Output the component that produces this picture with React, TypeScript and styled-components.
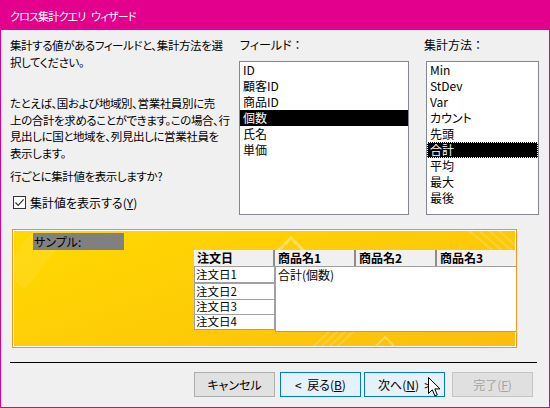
import * as React from 'react';
import styled, { createGlobalStyle, css } from 'styled-components';

const GlobalStyle = createGlobalStyle`
  html, body {
    margin: 0;
    padding: 0;
    background: #ffffff;
  }
`;

const fields = ['ID', '顧客ID', '商品ID', '個数', '氏名', '単価'];
const methods = ['Min', 'StDev', 'Var', 'カウント', '先頭', '合計', '平均', '最大', '最後'];
const rowHeads = [
  { label: '注文日1', height: 17 },
  { label: '注文日2', height: 17 },
  { label: '注文日3', height: 15 },
  { label: '注文日4', height: 15 },
];
const colHeads = [
  { label: '商品名1', width: 81 },
  { label: '商品名2', width: 81 },
  { label: '商品名3', width: 85 },
];

const App: React.FC = () => {
  return (
    <>
      <GlobalStyle />
      <Window>
        <TitleBar>クロス集計クエリ ウィザード</TitleBar>
        <Body>
          <TopSection>
            <Instructions>
              <Para>
                集計する値があるフィールドと、集計方法を選
                <br />
                択してください。
              </Para>
              <Para $gap={25}>
                たとえば、国および地域別、営業社員別に売
                <br />
                上の合計を求めることができます。この場合、行
                <br />
                見出しに国と地域を、列見出しに営業社員を
                <br />
                表示します。
              </Para>
              <Para $gap={7}>行ごとに集計値を表示しますか?</Para>
              <CheckRow>
                <CheckBox>
                  <svg width="11" height="11" viewBox="0 0 11 11">
                    <path d="M1.5 5.5 L4.2 8.3 L9.6 2.4" fill="none" stroke="#333" strokeWidth="1.2" />
                  </svg>
                </CheckBox>
                <span>
                  集計値を表示する(<u>Y</u>)
                </span>
              </CheckRow>
            </Instructions>

            <PickColumn $width={170}>
              <PickLabel>
                フィールド<Colon>：</Colon>
              </PickLabel>
              <ListBox>
                {fields.map((f) => (
                  <ListItem key={f} $selected={f === '個数'}>
                    {f}
                  </ListItem>
                ))}
              </ListBox>
            </PickColumn>

            <PickColumn $width={113} $ml={17}>
              <PickLabel $shift={-2}>
                集計方法<Colon>：</Colon>
              </PickLabel>
              <ListBox>
                {methods.map((m) => (
                  <ListItem key={m} $selected={m === '合計'} $focused={m === '合計'}>
                    {m}
                  </ListItem>
                ))}
              </ListBox>
            </PickColumn>
          </TopSection>

          <SamplePanel>
            <Decor width="503" height="117" viewBox="0 0 503 117">
              <polyline points="264,22 278,8 292,22" fill="none" stroke="#fff" strokeOpacity="0.35" strokeWidth="3" />
              <g stroke="#fff" strokeOpacity="0.18" strokeWidth="2">
                <line x1="455" y1="0" x2="503" y2="40" />
                <line x1="465" y1="0" x2="503" y2="32" />
                <line x1="475" y1="0" x2="503" y2="24" />
                <line x1="485" y1="0" x2="503" y2="16" />
                <line x1="300" y1="117" x2="318" y2="100" />
                <line x1="308" y1="117" x2="326" y2="100" />
                <line x1="316" y1="117" x2="334" y2="100" />
                <line x1="324" y1="117" x2="342" y2="100" />
              </g>
              <polyline points="362,117 372,107 382,117" fill="none" stroke="#ffe97a" strokeOpacity="0.6" strokeWidth="2" />
              <line x1="40" y1="0" x2="0" y2="50" stroke="#fff" strokeOpacity="0.08" strokeWidth="30" />
            </Decor>
            <SampleLabel>サンプル:</SampleLabel>
            <Preview>
              <RowHeadColumn>
                <HeadCell $width={81}>注文日</HeadCell>
                {rowHeads.map((r) => (
                  <RowCell key={r.label} $height={r.height}>
                    {r.label}
                  </RowCell>
                ))}
              </RowHeadColumn>
              <DataColumn>
                <HeadRow>
                  {colHeads.map((c) => (
                    <HeadCell key={c.label} $width={c.width}>
                      {c.label}
                    </HeadCell>
                  ))}
                </HeadRow>
                <DataBody>合計(個数)</DataBody>
              </DataColumn>
            </Preview>
          </SamplePanel>

          <Separator />

          <ButtonRow>
            <Button>キャンセル</Button>
            <Button $variant="focus" $ml={5}>
              {'<  戻る('}
              <u>B</u>)
            </Button>
            <Button $variant="focus" $ml={3}>
              次へ(<u>N</u>
              {')  >'}
            </Button>
            <Button $variant="disabled" $ml={7} disabled>
              完了(<u>F</u>)
            </Button>
          </ButtonRow>
        </Body>

        <Cursor width="13" height="20" viewBox="0 0 13 20">
          <path
            d="M0.5 0.5 L0.5 16.5 L4.3 12.8 L6.9 18.9 L9.3 17.9 L6.8 11.9 L12 11.9 Z"
            fill="#fff"
            stroke="#000"
            strokeWidth="1"
            strokeLinejoin="miter"
          />
        </Cursor>
      </Window>
    </>
  );
};

const Window = styled.div`
  position: relative;
  width: 550px;
  height: 408px;
  box-sizing: border-box;
  border: 1px solid #e3008c;
  background: #f0f0f0;
  display: flex;
  flex-direction: column;
  font-family: 'Noto Sans CJK JP', sans-serif;
  font-size: 12px;
  font-feature-settings: 'palt';
  color: #000;
  overflow: hidden;
`;

const TitleBar = styled.div`
  height: 29px;
  flex-shrink: 0;
  background: #e3008c;
  color: #fff;
  display: flex;
  align-items: center;
  padding-left: 9px;
  padding-top: 1px;
  box-sizing: border-box;
  font-size: 11px;
  letter-spacing: -0.8px;
  word-spacing: 4px;
  white-space: pre;
`;

const Body = styled.div`
  display: flex;
  flex-direction: column;
  padding: 7px 0 0 9px;
`;

const TopSection = styled.div`
  display: flex;
  align-items: flex-start;
`;

const Instructions = styled.div`
  width: 229px;
  line-height: 16.5px;
`;

const Para = styled.p<{ $gap?: number }>`
  margin: ${(p) => p.$gap || 0}px 0 0;
  white-space: nowrap;
  font-size: 11.5px;
  letter-spacing: -0.4px;
`;

const CheckRow = styled.label`
  display: flex;
  align-items: center;
  gap: 4px;
  margin: 10px 0 0 3px;
  height: 16.5px;
`;

const CheckBox = styled.span`
  width: 13px;
  height: 13px;
  box-sizing: border-box;
  border: 1px solid #333;
  background: #fff;
  display: flex;
  align-items: center;
  justify-content: center;
`;

const PickColumn = styled.div<{ $width: number; $ml?: number }>`
  width: ${(p) => p.$width}px;
  margin-left: ${(p) => p.$ml || 0}px;
  display: flex;
  flex-direction: column;
`;

const PickLabel = styled.div<{ $shift?: number }>`
  height: 16px;
  line-height: 16px;
  margin: 0 0 8px ${(p) => p.$shift ?? 1}px;
  white-space: nowrap;
`;

const Colon = styled.span`
  font-feature-settings: normal;
`;

const ListBox = styled.div`
  height: 154px;
  box-sizing: border-box;
  border: 1px solid #828790;
  background: #fff;
`;

const ListItem = styled.div<{ $selected?: boolean; $focused?: boolean }>`
  height: 16px;
  line-height: 16px;
  padding-left: 3px;
  white-space: nowrap;
  ${(p) =>
    p.$selected &&
    css`
      background: #000;
      color: #fff;
    `}
  ${(p) =>
    p.$focused &&
    css`
      outline: 1px dotted #fff;
      outline-offset: -1px;
    `}
`;

const SamplePanel = styled.div`
  position: relative;
  margin: 14px 0 0 2px;
  width: 505px;
  height: 119px;
  box-sizing: border-box;
  border: 1px solid #f39323;
  box-shadow: inset 0 0 0 1px #fff;
  background: linear-gradient(160deg, #ffd900 0%, #fecd05 45%, #fbbd10 100%);
  overflow: hidden;
`;

const Decor = styled.svg`
  position: absolute;
  left: 0;
  top: 0;
  pointer-events: none;
`;

const SampleLabel = styled.div`
  position: relative;
  margin: 3px 0 0 20px;
  width: 91px;
  height: 17px;
  line-height: 17px;
  padding-left: 1px;
  box-sizing: border-box;
  background: #808080;
  color: #000;
`;

const Preview = styled.div`
  position: relative;
  display: flex;
  margin-left: 181px;
  align-items: flex-start;
`;

const RowHeadColumn = styled.div`
  width: 81px;
  display: flex;
  flex-direction: column;
`;

const DataColumn = styled.div`
  width: 247px;
  display: flex;
  flex-direction: column;
`;

const HeadRow = styled.div`
  display: flex;
`;

const HeadCell = styled.div<{ $width: number }>`
  width: ${(p) => p.$width}px;
  height: 16px;
  line-height: 16px;
  box-sizing: border-box;
  padding-left: 3px;
  background: #f0f0f0;
  font-weight: bold;
  border-right: 2px solid #8c8c8c;
  white-space: nowrap;
`;

const RowCell = styled.div<{ $height: number }>`
  height: ${(p) => p.$height}px;
  line-height: ${(p) => p.$height - 2}px;
  font-size: 11.5px;
  box-sizing: border-box;
  background: #fff;
  border: 1px solid #a0a0a0;
  border-top-width: ${(p) => (p.$height > 16 ? 1 : 0)}px;
  padding-left: 1px;
  white-space: nowrap;
`;

const DataBody = styled.div`
  height: 66px;
  box-sizing: border-box;
  background: #fff;
  border: 1px solid #a0a0a0;
  line-height: 15px;
  padding: 0 0 0 2px;
`;

const Separator = styled.div`
  margin-top: 14px;
  width: 527px;
  height: 1px;
  background: #000;
`;

const ButtonRow = styled.div`
  display: flex;
  justify-content: flex-end;
  margin-top: 9px;
  padding-right: 16px;
`;

const Button = styled.button<{ $variant?: 'default' | 'focus' | 'disabled'; $ml?: number }>`
  width: 81px;
  height: 25px;
  box-sizing: border-box;
  margin-left: ${(p) => p.$ml || 0}px;
  padding: 0;
  font: inherit;
  font-feature-settings: 'palt';
  white-space: pre;
  border: 1px solid #adadad;
  background: #e1e1e1;
  color: #000;
  ${(p) =>
    p.$variant === 'focus' &&
    css`
      background: #e5f1fb;
      border-color: #0078d7;
    `}
  ${(p) =>
    p.$variant === 'disabled' &&
    css`
      background: #e0e0e0;
      border-color: #c4c4c4;
      color: #a3a3a3;
    `}
`;

const Cursor = styled.svg`
  position: absolute;
  left: 427px;
  top: 376px;
`;

export default App;
